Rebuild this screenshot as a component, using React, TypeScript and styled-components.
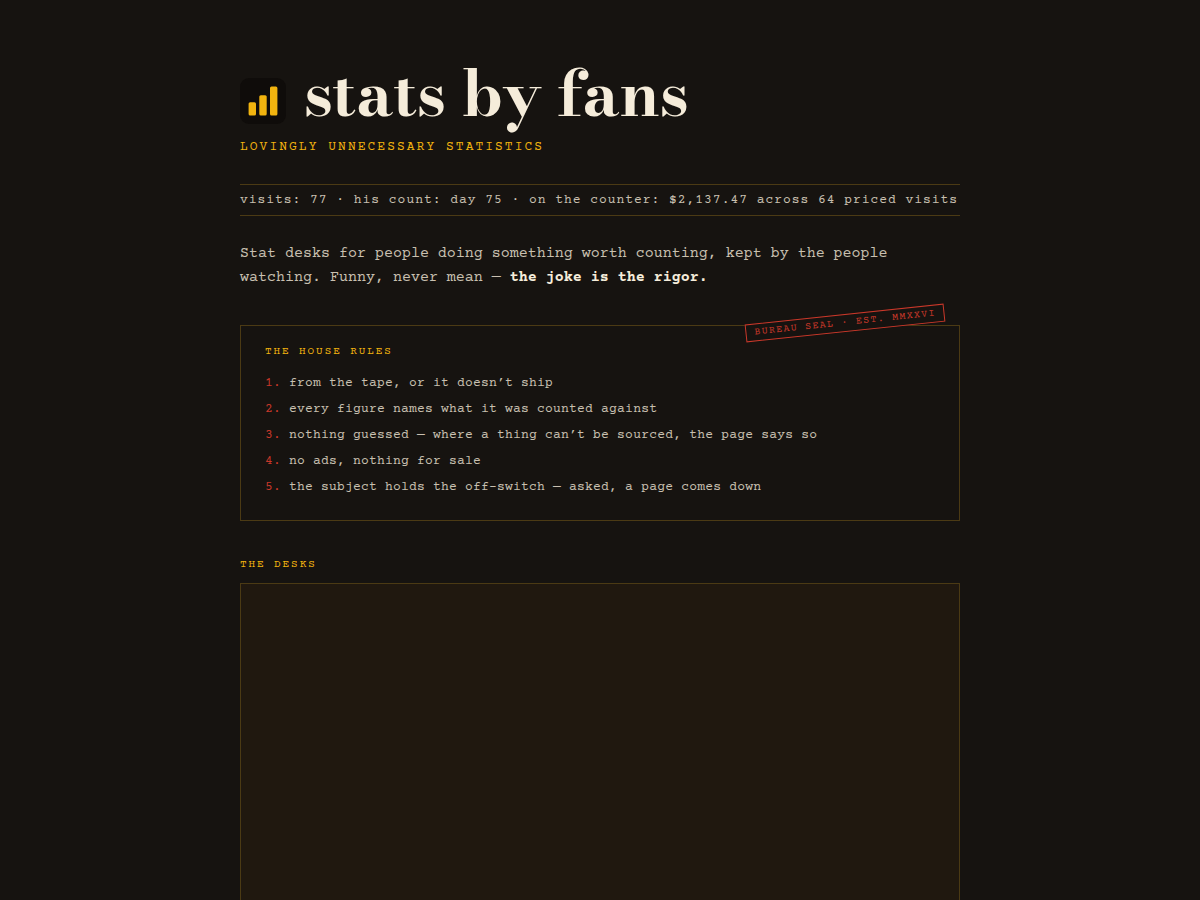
import React from "react";
import styled, { createGlobalStyle } from "styled-components";

const ink = "#161310";
const amber = "#f2b40f";
const cream = "#f5ecda";
const muted = "#c9c0b0";
const red = "#c9382a";
const rule = "#4b3a14";

const GlobalStyle = createGlobalStyle`
  *, *::before, *::after { box-sizing: border-box; }
  body {
    margin: 0;
    background: ${ink};
    color: ${muted};
    font: 15px/24px "Courier Prime", Courier, "Liberation Mono", monospace;
  }
`;

const Page = styled.main`
  max-width: 768px;
  margin: 0 auto;
  padding: 57px 24px 64px;
`;

const Masthead = styled.header`
  display: flex;
  align-items: center;
  gap: 18px;
`;

const Logo = styled.svg`
  flex: none;
  width: 46px;
  height: 46px;
  margin-top: 16px;
`;

const Title = styled.h1`
  margin: 0;
  color: ${cream};
  font: 700 64px/72px "Bodoni Moda", "Liberation Serif", serif;
  font-optical-sizing: auto;
`;

const Tagline = styled.p`
  margin: 8px 0 27px;
  color: ${amber};
  font-size: 13px;
  line-height: 20px;
  letter-spacing: 0.155em;
  text-transform: uppercase;
`;

const Ticker = styled.p`
  margin: 0 0 26px;
  padding: 5px 0;
  border: solid ${rule};
  border-width: 1px 0;
  font-size: 13px;
  line-height: 20px;
  letter-spacing: 0.074em;
`;

const Intro = styled.p`
  margin: 0 0 35px;

  strong { color: ${cream}; }
`;

const RulesBox = styled.section`
  position: relative;
  padding: 18px 24px 20px;
  border: 1px solid ${rule};
`;

const Seal = styled.span`
  position: absolute;
  top: -12px;
  right: 14px;
  padding: 0 8px;
  border: 1px solid ${red};
  background: ${ink};
  color: ${red};
  font-size: 10px;
  line-height: 16px;
  letter-spacing: 0.13em;
  text-transform: uppercase;
  white-space: nowrap;
  transform: rotate(-6deg);
`;

const Label = styled.h2`
  margin: 0 0 10px;
  color: ${amber};
  font-size: 11px;
  font-weight: 400;
  line-height: 16px;
  letter-spacing: 0.175em;
  text-transform: uppercase;
`;

const RuleList = styled.ol`
  margin: 0;
  padding: 0;
  list-style: none;
  counter-reset: rule;
  font-size: 13px;
  line-height: 26px;
  letter-spacing: 0.016em;
`;

const Rule = styled.li`
  display: flex;
  counter-increment: rule;

  &::before {
    content: counter(rule) ".";
    flex: none;
    width: 24px;
    color: ${red};
  }
`;

const Desks = styled.section`
  margin-top: 36px;
`;

const DeskCard = styled.div`
  min-height: 480px;
  border: 1px solid ${rule};
  background: #20180f;
`;

const rules = [
  "from the tape, or it doesn’t ship",
  "every figure names what it was counted against",
  "nothing guessed — where a thing can’t be sourced, the page says so",
  "no ads, nothing for sale",
  "the subject holds the off-switch — asked, a page comes down",
];

export default function App() {
  return (
    <>
      <GlobalStyle />
      <Page>
        <Masthead>
          <Logo viewBox="0 0 46 46" aria-hidden="true">
            <rect width="46" height="46" rx="9" fill="#0f0c0a" />
            <g fill={amber}>
              <rect x="8.6" y="24.2" width="7.4" height="13.4" rx="1.5" />
              <rect x="19.3" y="17.2" width="7.4" height="20.4" rx="1.5" />
              <rect x="30" y="8.6" width="7.4" height="29" rx="1.5" />
            </g>
          </Logo>
          <Title>stats by fans</Title>
        </Masthead>
        <Tagline>Lovingly unnecessary statistics</Tagline>
        <Ticker>
          visits: 77 · his count: day 75 · on the counter: $2,137.47 across 64 priced visits
        </Ticker>
        <Intro>
          Stat desks for people doing something worth counting, kept by the people
          watching. Funny, never mean — <strong>the joke is the rigor.</strong>
        </Intro>
        <RulesBox>
          <Seal>Bureau seal · Est. MMXXVI</Seal>
          <Label>The house rules</Label>
          <RuleList>
            {rules.map((text) => (
              <Rule key={text}>{text}</Rule>
            ))}
          </RuleList>
        </RulesBox>
        <Desks>
          <Label>The desks</Label>
          <DeskCard />
        </Desks>
      </Page>
    </>
  );
}
